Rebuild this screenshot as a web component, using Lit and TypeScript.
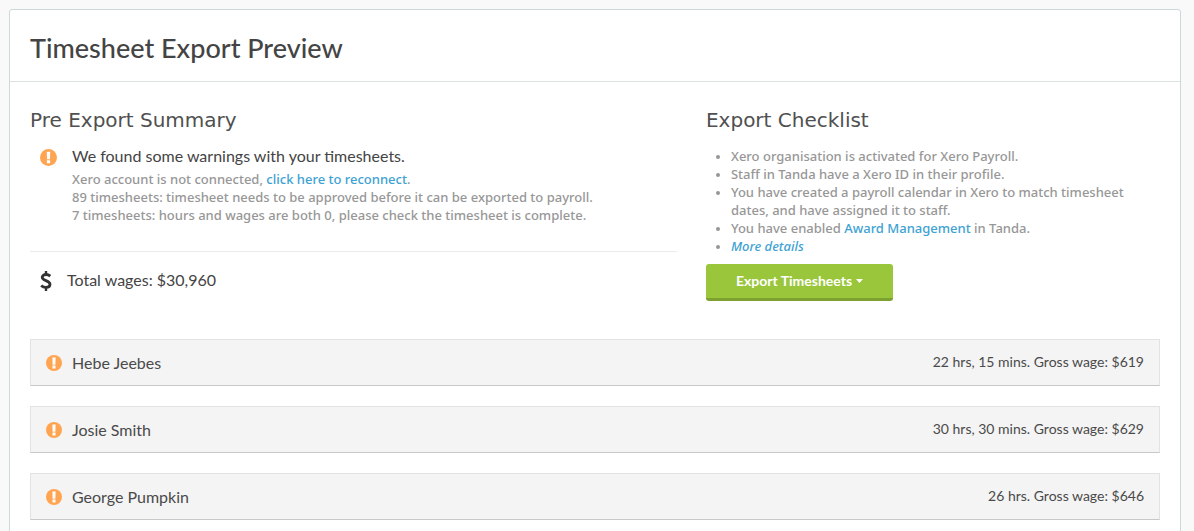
import { LitElement, html, css } from "lit";
import { customElement, property, state } from "lit/decorators.js";

interface StaffRow {
  name: string;
  summary: string;
}

@customElement("warning-icon")
class WarningIcon extends LitElement {
  static styles = css`
    :host { display: block; flex: none; width: 16px; height: 16px; }
    .glyph { display: block; width: 100%; height: 100%; }
  `;
  render() {
    return html`<svg class="glyph" viewBox="0 0 16 16" role="img" aria-label="Warning">
      <circle cx="8" cy="8" r="8" fill="#ffa552" />
      <path d="M6.4 2.500h3.200l-.2 7.200H6.600z" fill="#fff" />
      <rect x="6.500" y="10.600" width="3" height="2.900" rx=".2" fill="#fff" />
    </svg>`;
  }
}

@customElement("staff-row")
class StaffRowElement extends LitElement {
  @property() name = "";
  @property() summary = "";

  static styles = css`
    :host { display: block; }
    .row {
      display: flex;
      align-items: flex-start;
      gap: 10px;
      padding: 11px 15px;
      background: #f4f4f4;
      border: 1px solid #e2e2e2;
      border-bottom-color: #c8c8c8;
      color: #4a4a4a;
    }
    .icon { margin-top: 4px; }
    .name { flex: 1; margin: 0; font-size: 16px; line-height: 23px; font-weight: 400; }
    .summary { font-size: 14px; line-height: 22px; }
  `;
  render() {
    return html`<div class="row">
      <warning-icon class="icon"></warning-icon>
      <h3 class="name">${this.name}</h3>
      <span class="summary">${this.summary}</span>
    </div>`;
  }
}

@customElement("app-root")
class AppRoot extends LitElement {
  @state() private staff: StaffRow[] = [
    { name: "Hebe Jeebes", summary: "22 hrs, 15 mins. Gross wage: $619" },
    { name: "Josie Smith", summary: "30 hrs, 30 mins. Gross wage: $629" },
    { name: "George Pumpkin", summary: "26 hrs. Gross wage: $646" },
  ];

  static styles = css`
    :host {
      display: block;
      box-sizing: border-box;
      height: 100vh;
      overflow: hidden;
      padding: 9px 13px 0 9px;
      background: #f9f9f9;
      font-family: Lato, "Liberation Sans", sans-serif;
      color: #444;
    }
    .card {
      box-sizing: border-box;
      min-height: 100vh;
      background: #fff;
      border: 1px solid #cdd9d8;
      border-radius: 3px;
    }
    .head { padding: 20px 20px 15px; border-bottom: 1px solid #dbe0e0; }
    .title { margin: 0; font-size: 27px; line-height: 36px; font-weight: 500; }
    .body { padding: 24px 20px 20px; }
    .columns { display: grid; grid-template-columns: 57fr 40fr; gap: 29px; }
    .section {
      margin: 0;
      font: 400 20px/28px "DejaVu Sans", sans-serif;
      color: #505050;
    }
    .warning { display: flex; gap: 15px; padding: 12px 10px 27px; border-bottom: 1px solid #ebebeb; }
    .lead { margin: 0; font-size: 16px; line-height: 24px; }
    .warning warning-icon { margin-top: 3px; width: 17px; height: 17px; }
    .warning .lead { margin: -2px 0 2px; }
    .note, .list {
      margin: 0;
      font: 500 13px/18px "Noto Sans", sans-serif;
      color: #979797;
    }
    .link { color: #3ea2d3; text-decoration: none; }
    .wages { display: flex; align-items: center; gap: 15px; padding: 16px 10px 0; }
    .dollar { flex: none; width: 12px; height: 22px; }
    .list { margin-top: 13px; padding-left: 25px; }
    .list li::marker { font-size: 12px; }
    .export {
      display: inline-flex;
      align-items: center;
      gap: 4px;
      margin-top: 9px;
      padding: 7px 30px;
      border: 0;
      border-bottom: 3px solid #7ca131;
      border-radius: 3px;
      background: #9ac63c;
      color: #fff;
      font: 700 14px/20px Lato, sans-serif;
    }
    .caret { width: 7px; height: 4px; }
    .staff { display: grid; gap: 20px; margin-top: 38px; }
  `;

  render() {
    return html`<main class="card">
      <header class="head"><h1 class="title">Timesheet Export Preview</h1></header>
      <div class="body">
        <div class="columns">
          <section>
            <h2 class="section">Pre Export Summary</h2>
            <div class="warning">
              <warning-icon></warning-icon>
              <div>
                <p class="lead">We found some warnings with your timesheets.</p>
                <p class="note">Xero account is not connected, <a class="link" href="#">click here to reconnect</a>.</p>
                <p class="note">89 timesheets: timesheet needs to be approved before it can be exported to payroll.</p>
                <p class="note">7 timesheets: hours and wages are both 0, please check the timesheet is complete.</p>
              </div>
            </div>
            <div class="wages">
              <svg class="dollar" viewBox="0 -2 12 22" fill="none" stroke="#333" aria-hidden="true">
                <path d="M6 0v4M6 16v4" stroke-width="2.4" />
                <path d="M10.3 5.1C9 4 7.600 3.500 6 3.500C3.700 3.500 2.200 4.600 2.200 6.300C2.200 10.200 10 9 10 13.300C10 15.200 8.400 16.400 6 16.400C4.100 16.400 2.500 15.700 1.200 14.400" stroke-width="2.800" />
              </svg>
              <p class="lead">Total wages: $30,960</p>
            </div>
          </section>
          <section>
            <h2 class="section">Export Checklist</h2>
            <ul class="list">
              <li>Xero organisation is activated for Xero Payroll.</li>
              <li>Staff in Tanda have a Xero ID in their profile.</li>
              <li>You have created a payroll calendar in Xero to match timesheet dates, and have assigned it to staff.</li>
              <li>You have enabled <a class="link" href="#">Award Management</a> in Tanda.</li>
              <li><a class="link" href="#"><em>More details</em></a></li>
            </ul>
            <button class="export" type="button" aria-haspopup="menu">
              Export Timesheets
              <svg class="caret" viewBox="0 0 7 4" aria-hidden="true"><path d="M0 0h7L3.500 4z" fill="#fff" /></svg>
            </button>
          </section>
        </div>
        <div class="staff">
          ${this.staff.map((s) => html`<staff-row .name=${s.name} .summary=${s.summary}></staff-row>`)}
        </div>
      </div>
    </main>`;
  }
}
